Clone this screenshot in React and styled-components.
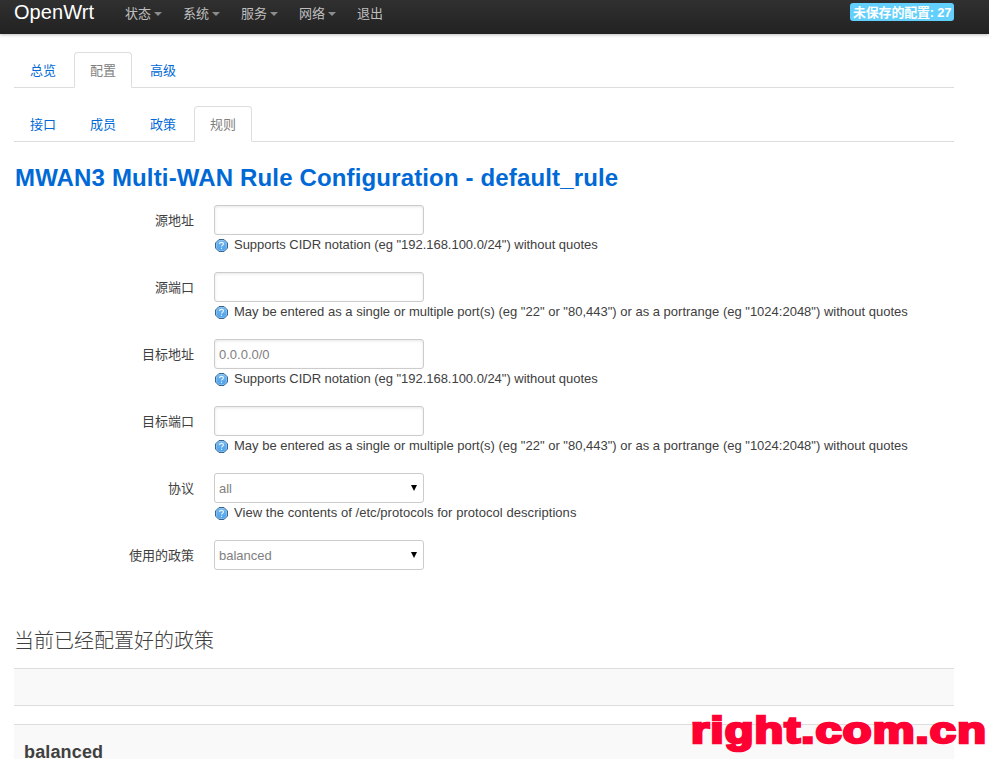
import React from 'react';
import styled, { createGlobalStyle } from 'styled-components';

const GlobalStyle = createGlobalStyle`
  * { box-sizing: border-box; }
  html, body { margin: 0; height: 759px; overflow: hidden; }
  body {
    background: #fff;
    color: #404040;
    font: 13px/18px "Liberation Sans", "Noto Sans CJK SC", sans-serif;
  }
`;

const Page = styled.div`
  position: relative;
  height: 759px;
  overflow: hidden;
`;

const Header = styled.header`
  display: flex;
  align-items: flex-start;
  height: 34px;
  padding: 0 35px 0 14px;
  background: linear-gradient(#303030, #222);
  box-shadow: 0 1px 3px rgba(0, 0, 0, 0.25);
`;

const Brand = styled.a`
  width: 101px;
  color: #fff;
  font-size: 20px;
  line-height: 24px;
  letter-spacing: 0.05px;
`;

const Nav = styled.nav`
  display: flex;
  flex: 1;
`;

const NavLink = styled.a`
  display: flex;
  align-items: center;
  height: 27px;
  padding: 0 10px;
  margin-right: 1px;
  color: #bfbfbf;
`;

const Caret = styled.i`
  margin: 1px 0 0 3px;
  border: 4px solid transparent;
  border-top-color: #8c8c8c;
  border-bottom: 0;
`;

const Badge = styled.span`
  height: 18px;
  margin-top: 3px;
  padding: 0 3px;
  width: 104px;
  border-radius: 3px;
  background: #62cffc;
  color: #fff;
  font-size: 13px;
  font-weight: 700;
  line-height: 19px;
  white-space: nowrap;
  letter-spacing: -0.2px;
`;

const Content = styled.main`
  width: 940px;
  margin: 18px 0 0 14px;
`;

const Tabs = styled.div`
  display: flex;
  gap: 2px;
  height: 36px;
  margin-bottom: 18px;
  border-bottom: 1px solid #ddd;
`;

const Tab = styled.a`
  width: 58px;
  height: 36px;
  border: 1px solid ${(p) => (p.$active ? '#ddd' : 'transparent')};
  border-bottom-color: ${(p) => (p.$active ? '#fff' : '#ddd')};
  border-radius: ${(p) => (p.$active ? '4px 4px 0 0' : '0')};
  background: ${(p) => (p.$active ? '#fff' : 'transparent')};
  color: ${(p) => (p.$active ? '#808080' : '#0069d6')};
  line-height: 35px;
  text-align: center;
`;

const Title = styled.h2`
  margin: 0;
  height: 45px;
  padding-left: 1px;
  color: #0069d6;
  font-size: 24px;
  line-height: 36px;
  letter-spacing: 0.15px;
  white-space: nowrap;
`;

const Form = styled.form`
  display: flex;
  flex-direction: column;
`;

const Row = styled.div`
  display: grid;
  grid-template-columns: 180px 1fr;
  column-gap: 20px;
  height: 67px;
`;

const Label = styled.label`
  line-height: 31px;
  text-align: right;
`;

const Input = styled.input`
  display: block;
  width: 210px;
  height: 30px;
  padding: 4px;
  border: 1px solid #ccc;
  border-radius: 3px;
  outline: 0;
  box-shadow: inset 0 1px 3px rgba(0, 0, 0, 0.1);
  color: #808080;
  font: inherit;
  &::placeholder { color: #808080; }
`;

const Select = styled.div`
  display: flex;
  align-items: center;
  justify-content: space-between;
  width: 210px;
  height: 30px;
  padding: 1px 6px 0 4px;
  border: 1px solid #ccc;
  border-radius: 3px;
  color: #808080;
`;

const Arrow = styled.i`
  margin-bottom: 1px;
  border: 3.5px solid transparent;
  border-top: 6px solid #000;
  border-bottom: 0;
`;

const Help = styled.div`
  display: flex;
  align-items: center;
  gap: 6px;
  height: 20px;
  padding-left: 1px;
  letter-spacing: ${(p) => p.$spacing || 0}px;
  white-space: nowrap;
`;

const HelpMark = styled.svg`
  width: 13px;
  height: 13px;
  margin-top: 1px;
  flex: none;
`;

const SectionTitle = styled.h3`
  margin: 15px 0 10px;
  height: 36px;
  font-size: 20px;
  font-weight: 300;
  line-height: 38px;
`;

const Panel = styled.section`
  height: ${(p) => p.$height}px;
  margin-bottom: 18px;
  padding: 9px 10px;
  border: solid #ddd;
  border-width: 1px 0;
  background: #f9f9f9;
`;

const PanelTitle = styled.h4`
  margin: 0;
  font-size: 18px;
  line-height: 36px;
  letter-spacing: 0.15px;
`;

const Watermark = styled.div`
  position: absolute;
  left: 691px;
  top: 709px;
  color: #ff0033;
  font: 700 36px/44px "Liberation Sans", sans-serif;
  -webkit-text-stroke: 2.6px #ff0033;
  white-space: nowrap;
  letter-spacing: 0.9px;
  transform: scaleX(1.305);
  transform-origin: 0 0;
`;

const menus = ['状态', '系统', '服务', '网络'];
const cidr = 'Supports CIDR notation (eg "192.168.100.0/24") without quotes';
const ports =
  'May be entered as a single or multiple port(s) (eg "22" or "80,443") or as a portrange (eg "1024:2048") without quotes';

const fields = [
  { label: '源地址', help: cidr, spacing: -0.03 },
  { label: '源端口', help: ports },
  { label: '目标地址', placeholder: '0.0.0.0/0', help: cidr, spacing: -0.03 },
  { label: '目标端口', help: ports },
  {
    label: '协议',
    option: 'all',
    help: 'View the contents of /etc/protocols for protocol descriptions',
    spacing: 0.05,
  },
  { label: '使用的政策', option: 'balanced' },
];

function HelpIcon() {
  return (
    <HelpMark viewBox="0 0 13 13">
      <defs>
        <linearGradient id="help-fill" x2="0" y2="1">
          <stop stopColor="#78baf0" />
          <stop offset="1" stopColor="#4b9ee8" />
        </linearGradient>
      </defs>
      <path d="M4 .5h5L12.5 4v5L9 12.5H4L.5 9V4z" fill="url(#help-fill)" stroke="#3b658c" />
      <path d="M4 1.5h5L11.5 4v5L9 11.5H4L1.5 9V4z" fill="none" stroke="#8fc8f5" strokeWidth=".7" />
      <path d="M4.5 5c0-2.2 4-2.2 4 0 0 1.2-2 1.2-2 2.6M6.5 8.7v1.2" fill="none" stroke="#e8f4ff" strokeWidth="1.1" />
    </HelpMark>
  );
}

function TabBar({ items, active }) {
  return (
    <Tabs>
      {items.map((item) => (
        <Tab key={item} $active={item === active}>{item}</Tab>
      ))}
    </Tabs>
  );
}

export default function App() {
  return (
    <Page>
      <GlobalStyle />
      <Header>
        <Brand>OpenWrt</Brand>
        <Nav>
          {menus.map((m) => (
            <NavLink key={m}>{m}<Caret /></NavLink>
          ))}
          <NavLink>退出</NavLink>
        </Nav>
        <Badge>未保存的配置: 27</Badge>
      </Header>
      <Content>
        <TabBar items={['总览', '配置', '高级']} active="配置" />
        <TabBar items={['接口', '成员', '政策', '规则']} active="规则" />
        <Title>MWAN3 Multi-WAN Rule Configuration - default_rule</Title>
        <Form>
          {fields.map((f) => (
            <Row key={f.label}>
              <Label>{f.label}</Label>
              <div>
                {f.option ? <Select>{f.option}<Arrow /></Select> : <Input placeholder={f.placeholder} />}
                {f.help && <Help $spacing={f.spacing}><HelpIcon /><span>{f.help}</span></Help>}
              </div>
            </Row>
          ))}
        </Form>
        <SectionTitle>当前已经配置好的政策</SectionTitle>
        <Panel $height={38} />
        <Panel $height={80}><PanelTitle>balanced</PanelTitle></Panel>
      </Content>
      <Watermark>right.com.cn</Watermark>
    </Page>
  );
}
